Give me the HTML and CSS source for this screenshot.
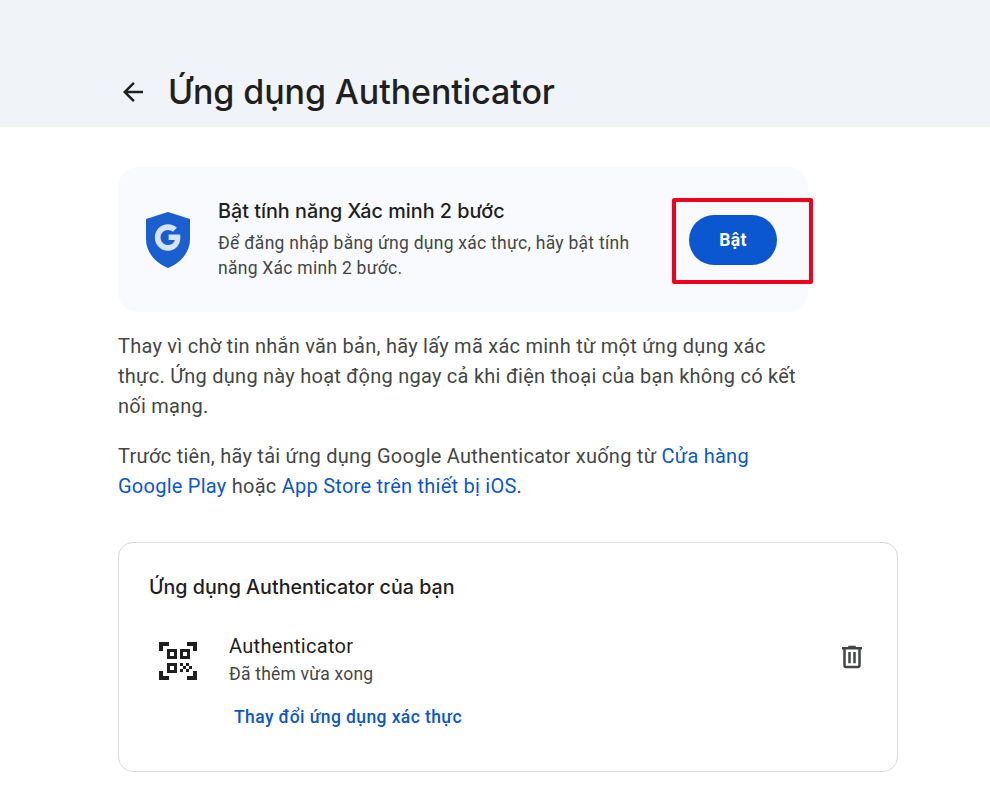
FILE: index.html
```html
<!DOCTYPE html>
<html lang="vi">
<head>
  <meta charset="utf-8">
  <title>Ứng dụng Authenticator</title>
  <link rel="stylesheet" href="styles.css">
</head>
<body>
  <header class="top">
    <svg class="back" viewBox="0 0 24 24" width="30" height="30"><path d="M20 11H7.830l5.590-5.590L12 4l-8 8 8 8 1.410-1.410L7.830 13H20z"/></svg>
    <h1>Ứng dụng Authenticator</h1>
  </header>

  <main class="content">
    <div class="promo">
      <svg class="shield" viewBox="0 0 44 56" width="44" height="56">
        <path d="M22 0 L44 7 V27 C44 41 34 51 22 56 C10 51 0 41 0 27 V7 Z" fill="#1a5fcf"/>
        <path transform="translate(22 25.500) scale(1.200) translate(-22 -30)" d="M32 27.500h-9.500v4.500h5.200c-.8 2.700-2.900 4.300-5.700 4.300-3.500 0-6.200-2.800-6.200-6.300s2.700-6.300 6.200-6.300c1.600 0 3 .6 4.100 1.500l3.300-3.300c-1.900-1.800-4.500-2.900-7.400-2.900-6.100 0-11 4.900-11 11s4.900 11 11 11c5.700 0 10.300-4 10.300-11 0-.9-.1-1.700-.3-2.500z" fill="#d5e4fa"/>
      </svg>
      <div class="promo-text">
        <h2>Bật tính năng Xác minh 2 bước</h2>
        <p>Để đăng nhập bằng ứng dụng xác thực, hãy bật tính năng Xác minh 2 bước.</p>
      </div>
      <button class="on-btn">Bật</button>
      <div class="highlight"></div>
    </div>

    <p class="para">Thay vì chờ tin nhắn văn bản, hãy lấy mã xác minh từ một ứng dụng xác thực. Ứng dụng này hoạt động ngay cả khi điện thoại của bạn không có kết nối mạng.</p>
    <p class="para">Trước tiên, hãy tải ứng dụng Google Authenticator xuống từ <a href="#">Cửa hàng Google Play</a> hoặc <a href="#">App Store trên thiết bị iOS</a>.</p>

    <section class="apps">
      <h3>Ứng dụng Authenticator của bạn</h3>
      <div class="app-row">
        <svg class="qr" viewBox="0 0 38 38" width="38" height="38">
          <path d="M0 9V0h10v4H4v5zM38 9V0H28v4h6v5zM0 29v9h10v-4H4v-5zM38 29v9H28v-4h6v-5z"/>
          <path fill-rule="evenodd" d="M8 7h10v10H8zM11 10v4h4v-4zM21 7h10v10H21zM24 10v4h4v-4zM8 21h10v10H8zM11 24v4h4v-4z"/>
          <path d="M21 21h3v3h-3zM27 21h3v3h-3zM24 24h3v3h-3zM30 24h3v3h-3zM21 27h3v3h-3zM27 27h3v3h-3z"/>
        </svg>
        <div class="app-info">
          <div class="app-name">Authenticator</div>
          <div class="app-date">Đã thêm vừa xong</div>
        </div>
        <svg class="trash" viewBox="0 0 24 24" width="30" height="30"><path d="M15 4V3H9v1H4v2h1v13c0 1.100.9 2 2 2h10c1.100 0 2-.9 2-2V6h1V4h-5zm2 15H7V6h10v13zM9 8h2v9H9zm4 0h2v9h-2z"/></svg>
      </div>
      <a class="change" href="#">Thay đổi ứng dụng xác thực</a>
    </section>
  </main>
</body>
</html>
```

FILE: styles.css
```css
* { margin: 0; padding: 0; box-sizing: border-box; }
body {
  font-family: Roboto, "Liberation Sans", sans-serif;
  background: #fff; color: #1f1f1f;
  height: 802px; overflow: hidden;
}
a { color: #0b57d0; text-decoration: none; }

.top {
  height: 127px; background: #f0f4f9;
  padding: 0 0 15px 118px;
  display: flex; align-items: flex-end; gap: 20px;
}
.back { fill: #1f1f1f; margin-bottom: 5px; }
.top h1 { font-family: Inter, sans-serif; font-size: 34px; font-weight: 500; line-height: 40px; letter-spacing: -0.1px; }

.content { padding: 40px 0 0 118px; }

.promo {
  position: relative;
  width: 690px; height: 145px;
  background: #f8fafd; border-radius: 20px;
  display: flex; align-items: center;
  padding: 0 31px 0 28px;
}
.shield { flex: none; margin-right: 28px; }
.promo-text { width: 430px; }
.promo h2 { font-family: Inter, sans-serif; font-size: 19.800px; font-weight: 500; line-height: 26px; margin-bottom: 7px; }
.promo p { font-size: 17.500px; line-height: 25px; color: #444746; letter-spacing: 0.26px; }
.on-btn {
  margin-left: auto;
  width: 88px; height: 50px; border: none; border-radius: 25px;
  background: #0b57d0; color: #fff;
  font-family: Roboto, sans-serif; font-size: 17.500px; font-weight: 700; letter-spacing: 0.3px;
}
.highlight {
  position: absolute; left: 554px; top: 31px;
  width: 141px; height: 86px;
  border: 4px solid #f0001c; border-radius: 2px;
}

.para { width: 690px; font-size: 20px; line-height: 30px; color: #444746; margin-top: 19px; letter-spacing: 0.25px; }
.para + .para { margin-top: 20px; }

.apps {
  width: 780px; height: 230px; margin-top: 41px;
  border: 1px solid #dadce0; border-radius: 15px;
  padding: 31px 30px 0;
}
.apps h3 { font-family: Inter, sans-serif; font-size: 19.700px; font-weight: 500; line-height: 26px; }
.app-row { display: flex; align-items: center; margin-top: 32px; }
.qr { flex: none; fill: #1f1f1f; margin: 2px 32px 0 10px; }
.app-info { flex: 1; }
.app-name { font-size: 20px; line-height: 28px; letter-spacing: 0.3px; }
.app-date { font-size: 17.500px; line-height: 28px; color: #444746; letter-spacing: 0.2px; }
.trash { fill: #444746; flex: none; margin: 0 0 7px; }
.change { display: block; margin: 16px 0 0 85px; font-size: 17.500px; font-weight: 500; line-height: 26px; letter-spacing: 0.4px; }
```
